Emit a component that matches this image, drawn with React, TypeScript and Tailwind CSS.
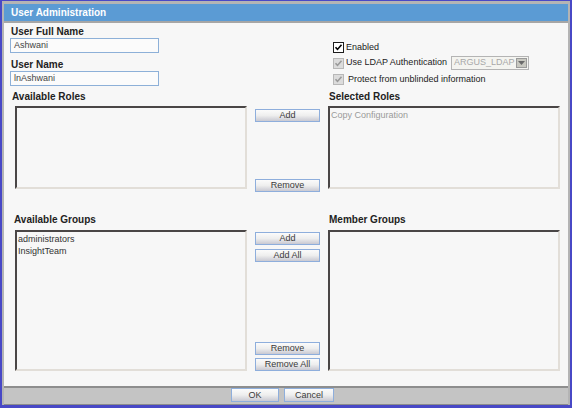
import type { ReactNode } from "react";

function Btn({ children, className = "" }: { children: ReactNode; className?: string }) {
  return (
    <button
      type="button"
      className={`flex items-center justify-center border border-[#8eaedc] bg-gradient-to-b from-[#fbfbfb] via-[#eeeeee] to-[#c9c9d2] text-[9px] leading-none text-[#3a3a3a] ${className}`}
    >
      {children}
    </button>
  );
}

function ListBox({ items = [], muted = false, className = "" }: { items?: string[]; muted?: boolean; className?: string }) {
  return (
    <div
      className={`border-2 border-t-[#4a4646] border-l-[#4a4646] border-b-[#e2ded8] border-r-[#e2ded8] bg-[#f7f7f7] px-[1px] pt-[1px] text-[9px] leading-[12px] ${muted ? "text-[#9a9a9a]" : "text-[#333]"} ${className}`}
    >
      {items.map((it) => (
        <div key={it}>{it}</div>
      ))}
    </div>
  );
}

function Check({ disabled = false }: { disabled?: boolean }) {
  return (
    <svg viewBox="0 0 11 11" className="h-[11px] w-[11px] shrink-0" aria-hidden>
      <rect
        x="0.5"
        y="0.5"
        width="10"
        height="10"
        fill={disabled ? "#dcdcdc" : "#ffffff"}
        stroke={disabled ? "#b8b8b8" : "#1c1c1c"}
      />
      <path
        d="M2.5 5.2l2 2.2 4-4.6"
        fill="none"
        stroke={disabled ? "#9a9a9a" : "#000"}
        strokeWidth="1.6"
      />
    </svg>
  );
}

export default function App() {
  return (
    <div
      className="h-[408px] w-[572px] border-b-[3px] border-l-2 border-r-2 border-t border-[#4848c6] bg-[#b4b4b4] px-[2px] pt-[3px] text-[#222]"
      style={{ fontFamily: '"Liberation Sans", Arial, sans-serif' }}
    >
      <div className="flex flex-col">
        <div className="flex h-[19px] items-center border-b-2 border-[#a6a6a6] bg-[#5b9bd4] pl-[7px] text-[10px] font-bold text-white">
          User Administration
        </div>

        <div className="h-[363px] bg-[#f7f7f7] pl-[6px]">
          {/* top fields */}
          <div className="flex">
            <div className="w-[318px]">
              <div className="pl-[1px] pt-[3px] text-[10px] font-bold leading-[12px]">User Full Name</div>
              <div className="flex h-[15px] w-[149px] items-center border border-[#8db0d8] bg-[#fbfbfb] pl-[3px] text-[9px] text-[#444]">
                Ashwani
              </div>
              <div className="pl-[1px] pt-[6px] text-[10px] font-bold leading-[12px]">User Name</div>
              <div className="flex h-[15px] w-[149px] items-center border border-[#8db0d8] bg-[#fbfbfb] pl-[3px] text-[9px] text-[#444]">
                lnAshwani
              </div>
            </div>
            <div className="flex flex-col pl-[5px] pt-[19px] text-[9px] text-[#222]">
              <div className="flex h-[11px] items-center gap-[2px]">
                <Check />
                <span>Enabled</span>
              </div>
              <div className="mt-[3px] flex h-[14px] items-center gap-[2px]">
                <Check disabled />
                <span>Use LDAP Authentication</span>
                <div className="ml-[2px] flex h-[14px] w-[78px] items-center border border-[#b4b4b4] bg-[#f4f4f0] pl-[2px] text-[#a8a8a8]">
                  <span className="flex-1">ARGUS_LDAP</span>
                  <span className="mr-[1px] flex h-[10px] w-[11px] items-center justify-center border border-[#9a9a9a] bg-[#c8c8c0]">
                    <svg viewBox="0 0 7 4" className="h-[4px] w-[7px]" aria-hidden>
                      <path d="M0 0h7L3.5 4z" fill="#6a6a6a" />
                    </svg>
                  </span>
                </div>
              </div>
              <div className="mt-[4px] flex h-[11px] items-center gap-[4px]">
                <Check disabled />
                <span>Protect from unblinded information</span>
              </div>
            </div>
          </div>

          {/* roles */}
          <div className="mt-[5px] grid grid-cols-[245px_73px_232px]">
            <div className="pl-[2px] text-[10px] font-bold leading-[12px]">Available Roles</div>
            <div />
            <div className="pl-[1px] text-[10px] font-bold leading-[12px]">Selected Roles</div>

            <ListBox className="ml-[5px] mt-[3px] h-[83px] w-[232px]" />
            <div className="flex flex-col justify-between pt-[6px]">
              <Btn className="h-[13px] w-[65px]">Add</Btn>
              <Btn className="-mb-[3px] h-[13px] w-[65px]">Remove</Btn>
            </div>
            <ListBox items={["Copy Configuration"]} muted className="mt-[3px] h-[83px] w-[232px]" />
          </div>

          {/* groups */}
          <div className="mt-[25px] grid grid-cols-[245px_73px_232px]">
            <div className="pl-[4px] text-[10px] font-bold leading-[12px]">Available Groups</div>
            <div />
            <div className="pl-[1px] text-[10px] font-bold leading-[12px]">Member Groups</div>

            <ListBox items={["administrators", "InsightTeam"]} className="ml-[5px] mt-[4px] h-[141px] w-[232px]" />
            <div className="flex flex-col pt-[6px]">
              <Btn className="h-[13px] w-[65px]">Add</Btn>
              <Btn className="mt-[4px] h-[13px] w-[65px]">Add All</Btn>
              <Btn className="mt-auto h-[13px] w-[65px]">Remove</Btn>
              <Btn className="mt-[3px] h-[13px] w-[65px]">Remove All</Btn>
            </div>
            <ListBox className="mt-[4px] h-[141px] w-[232px]" />
          </div>
        </div>

        <div className="flex h-[19px] items-start gap-[5px] border-b border-t-2 border-b-[#8c8c8c] border-t-[#8e8e8e] bg-[#c4c4c4] pl-[227px]">
          <Btn className="h-[14px] w-[48px]">OK</Btn>
          <Btn className="h-[14px] w-[50px]">Cancel</Btn>
        </div>
      </div>
    </div>
  );
}
